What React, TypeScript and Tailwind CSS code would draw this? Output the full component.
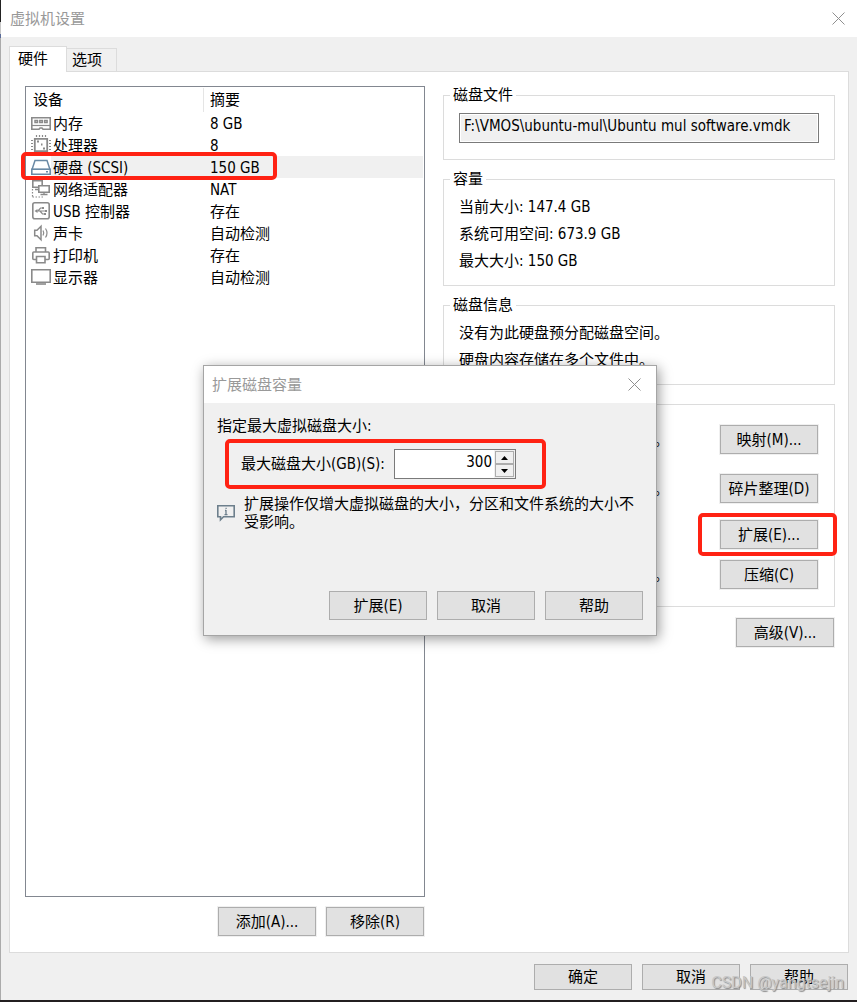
import { useState } from "react";
import type { ReactNode } from "react";
import clsx from "clsx";

type Device = {
  name: string;
  summary: string;
  icon: ReactNode;
};

const MemoryIcon = () => (
  <svg width="20" height="22" viewBox="0 0 20 22" fill="none" stroke="#8a8a8a" aria-hidden="true">
    <path d="M.8 5.800h18.400v11.400h-7.200l-1-1.200h-2l-1 1.200h-7.200z" strokeWidth="1.600" />
    <path d="M1 13.500h18" strokeWidth="1.200" />
    <path d="M4 8.500h2.500v2h-2.500zM8.800 8.500h2.500v2h-2.500zM13.600 8.500h2.500v2h-2.500z" strokeWidth="1.500" />
  </svg>
);

const CpuIcon = () => (
  <svg width="20" height="22" viewBox="0 0 20 22" fill="none" stroke="#8a8a8a" aria-hidden="true">
    <path d="M3.800 4.800h12.400v12.400h-12.400z" strokeWidth="1.800" />
    <path
      d="M5.500 1v2M8.500 1v2M11.500 1v2M14.500 1v2M5.500 19v2M8.500 19v2M11.500 19v2M14.500 19v2M0 6.500h2M0 9.500h2M0 12.500h2M0 15.500h2M18 6.500h2M18 9.500h2M18 12.500h2M18 15.500h2"
      strokeWidth="1.200"
    />
    <path d="M6 7.500h2M12 14.500h2M10 10.500h1.500" strokeWidth="1.800" />
  </svg>
);

const DiskIcon = () => (
  <svg width="20" height="22" viewBox="0 0 20 22" fill="none" stroke="#6a8aa5" aria-hidden="true">
    <path d="M4 4.500h12l3 9h-18z" fill="#fff" strokeWidth="1.500" />
    <path d="M.8 13.200h18.400v5h-18.400z" fill="#fff" strokeWidth="1.600" />
    <path d="M15 15.700h2" strokeWidth="1.500" />
  </svg>
);

const NetworkIcon = () => (
  <svg width="20" height="22" viewBox="0 0 20 22" fill="none" stroke="#8a8a8a" aria-hidden="true">
    <path d="M1.800 2.800h9.400v6.400h-9.400z" strokeWidth="1.600" />
    <path d="M7.800 7.800h10.400v6.400h-10.400z" fill="#fff" strokeWidth="1.600" />
    <path d="M9.500 16.500h7M13 14v2M4 11.500h3" strokeWidth="1.300" />
    <path d="M1.500 11v8M1.500 19h11" strokeWidth="1.200" strokeDasharray="1.500 1.500" />
  </svg>
);

const UsbIcon = () => (
  <svg width="20" height="22" viewBox="0 0 20 22" fill="none" stroke="#8a8a8a" aria-hidden="true">
    <rect x="1.800" y="2.800" width="16.400" height="16" rx="2" strokeWidth="1.600" />
    <path d="M5 11h10M7 11l2.500-3h2M9 11l2.500 3h2" strokeWidth="1.200" />
    <path d="M3.500 11l3-2v4z" fill="#8a8a8a" stroke="none" />
    <path d="M11 7h2v2h-2zM13 13h2v2h-2zM14 10h2v2h-2z" fill="#8a8a8a" stroke="none" />
  </svg>
);

const SoundIcon = () => (
  <svg width="20" height="22" viewBox="0 0 20 22" fill="none" stroke="#8a8a8a" strokeWidth="1.500" aria-hidden="true">
    <path d="M3.700 8.200h2.300l4-4v13.600l-4-4h-2.300z" />
    <path d="M12 8.500q1.500 2.500 0 5M14.500 6.500q3 4.500 0 9" strokeWidth="1.200" />
  </svg>
);

const PrinterIcon = () => (
  <svg width="20" height="22" viewBox="0 0 20 22" fill="none" stroke="#8a8a8a" strokeWidth="1.600" aria-hidden="true">
    <path d="M5 8v-4.200h9.500v4.200" />
    <rect x="1.800" y="8" width="16.400" height="7.500" rx="1" />
    <path d="M5.500 12.500h8.500v6.300h-8.500z" fill="#fff" />
  </svg>
);

const DisplayIcon = () => (
  <svg width="20" height="22" viewBox="0 0 20 22" fill="none" stroke="#8a8a8a" aria-hidden="true">
    <path d="M.8 3.800h18.400v12.400h-18.400z" strokeWidth="1.600" />
    <path d="M5 18h10" strokeWidth="1.600" />
  </svg>
);

const InfoIcon = () => (
  <svg width="18" height="18" viewBox="0 0 18 18" fill="none" stroke="#6d7f8c" aria-hidden="true">
    <path d="M.8 1.800h16.400v11h-10.700l-3 3v-3h-2.700z" strokeWidth="1.600" />
    <path d="M9 6v5M8 6.500h1M7.500 10.700h3M8.500 4.300h1.200" strokeWidth="1.300" />
  </svg>
);

const CloseIcon = () => (
  <svg width="13" height="13" viewBox="0 0 13 13" stroke="#8f8f8f" strokeWidth="1" aria-hidden="true">
    <path d="M.5 .5l12 12M12.500 .5l-12 12" />
  </svg>
);

const DEVICES: Device[] = [
  { name: "内存", summary: "8 GB", icon: <MemoryIcon /> },
  { name: "处理器", summary: "8", icon: <CpuIcon /> },
  { name: "硬盘 (SCSI)", summary: "150 GB", icon: <DiskIcon /> },
  { name: "网络适配器", summary: "NAT", icon: <NetworkIcon /> },
  { name: "USB 控制器", summary: "存在", icon: <UsbIcon /> },
  { name: "声卡", summary: "自动检测", icon: <SoundIcon /> },
  { name: "打印机", summary: "存在", icon: <PrinterIcon /> },
  { name: "显示器", summary: "自动检测", icon: <DisplayIcon /> },
];

const UTILITIES = [
  { text: "将该虚拟机磁盘映射到本地卷。", action: "映射(M)...", row: "mt-3" },
  { text: "整理文件碎片并整合可用空间。", action: "碎片整理(D)", row: "mt-5" },
  { text: "扩展磁盘容量。", action: "扩展(E)...", row: "mt-[17px]", marked: true },
  { text: "压缩磁盘以回收未使用的空间。", action: "压缩(C)", row: "mt-[11px]" },
];

const Button = ({ children, className }: { children: ReactNode; className?: string }) => (
  <button
    type="button"
    className={clsx(
      "w-[98px] shrink-0 border border-[#adadad] bg-[#e1e1e1] text-center leading-5 ring-1 ring-[#f0f0f0]",
      className ?? "h-[29px]"
    )}
  >
    {children}
  </button>
);

const Group = ({ title, children }: { title: string; children: ReactNode }) => (
  <fieldset className="min-w-0 border border-[#dcdcdc] px-[15px]">
    <legend className="-ml-[9px] px-[3px] leading-[18px]">{title}</legend>
    {children}
  </fieldset>
);

// 红色标注框
const Mark = ({ className }: { className: string }) => (
  <span
    className={clsx("pointer-events-none absolute z-10 rounded-[5px] border-4 border-[#ff2213]", className)}
    aria-hidden="true"
  />
);

const DeviceTable = () => {
  const [selected, setSelected] = useState(2);

  return (
    <div className="min-h-[320px] flex-1 border border-[#828790] bg-white">
      <table className="w-full table-fixed border-collapse text-left">
        <thead>
          <tr className="h-[25px]">
            <th className="w-[177px] p-0 pl-[7px] font-normal">设备</th>
            <th className="p-0 font-normal">
              <div className="border-l border-[#e5e5e5] pl-1.5 leading-6">摘要</div>
            </th>
          </tr>
        </thead>
        <tbody>
          {DEVICES.map((device, i) => (
            <tr key={device.name} className="h-[22px]" onClick={() => setSelected(i)}>
              <td className="relative p-0 pl-[5px]">
                <div className="flex h-[22px] items-center">
                  {device.icon}
                  <span className={clsx("h-[22px] flex-1 pt-0.5 pl-0.5", i === selected && "bg-[#f0f0f0]")}>
                    {device.name}
                  </span>
                </div>
                {i === selected && <Mark className="-top-1 -left-[5px] h-7 w-64" />}
              </td>
              <td className="p-0">
                <div className={clsx("mr-px h-[22px] pt-0.5 pl-[7px]", i === selected && "bg-[#f0f0f0]")}>
                  {device.summary}
                </div>
              </td>
            </tr>
          ))}
        </tbody>
      </table>
    </div>
  );
};

const ExpandDialog = () => {
  const [size, setSize] = useState(300);

  return (
    <div
      role="dialog"
      aria-labelledby="expand-title"
      className="absolute top-[365px] left-[203px] z-20 w-[454px] border border-[#a5a5a5] bg-[#f0f0f0] shadow-[2px_3px_12px_rgba(0,0,0,0.4)]"
    >
      <div className="flex h-[37px] items-center justify-between bg-white pr-[15px] pl-2">
        <h2 id="expand-title" className="text-[#999999]">扩展磁盘容量</h2>
        <button type="button" aria-label="关闭"><CloseIcon /></button>
      </div>

      <div className="px-[13px] pt-3.5 pb-[15px]">
        <p className="leading-[18px]">指定最大虚拟磁盘大小:</p>

        <div className="relative mt-3.5 flex h-[30px] items-center pl-6">
          <label htmlFor="disk-size" className="w-[153px]">最大磁盘大小(GB)(S):</label>
          <div className="flex h-[30px] w-[122px] border border-[#7a7a7a] bg-white">
            <input
              id="disk-size"
              type="text"
              inputMode="numeric"
              value={size}
              onChange={(e) => setSize(Number(e.target.value) || 0)}
              className="min-w-0 flex-1 pr-0.5 pb-1 text-right outline-none"
            />
            <div className="flex w-[21px] flex-col bg-[#f0f0f0] p-px">
              <button
                type="button"
                aria-label="增大"
                onClick={() => setSize(size + 1)}
                className="flex flex-1 items-center justify-center border border-[#adadad]"
              >
                <svg width="7" height="4" viewBox="0 0 7 4"><path d="M0 4l3.500-4 3.500 4z" /></svg>
              </button>
              <button
                type="button"
                aria-label="减小"
                onClick={() => setSize(size - 1)}
                className="flex flex-1 items-center justify-center border border-[#adadad]"
              >
                <svg width="7" height="4" viewBox="0 0 7 4"><path d="M0 0l3.500 4 3.500-4z" /></svg>
              </button>
            </div>
          </div>
          <Mark className="-top-[10px] left-2 h-[50px] w-[321px]" />
        </div>

        <div className="mt-4 flex items-center gap-[9px]">
          <span className="shrink-0"><InfoIcon /></span>
          <p className="leading-[18px]">扩展操作仅增大虚拟磁盘的大小，分区和文件系统的大小不受影响。</p>
        </div>

        <div className="mt-[60px] flex justify-end gap-2.5">
          <Button>扩展(E)</Button>
          <Button>取消</Button>
          <Button>帮助</Button>
        </div>
      </div>
    </div>
  );
};

const App = () => {
  return (
    <div className="relative flex min-h-screen flex-col border-b-2 border-[#231f20] bg-[#f0f0f0] pl-px font-['DejaVu_Sans_Condensed','Noto_Sans','Noto_Sans_CJK_SC',sans-serif] text-[15px] leading-5 text-black">
      {/* 窗口左侧露出的背景 */}
      <div
        className="absolute inset-y-0 left-0 w-px bg-[linear-gradient(#222_22px,#c8c8c8_22px,#c8c8c8_34px,#5a6b99_34px,#5a6b99_38px,#ababab_38px)]"
        aria-hidden="true"
      />

      <header className="flex h-[37px] items-center justify-between bg-white pr-3 pl-[9px]">
        <h1 className="text-[#999999]">虚拟机设置</h1>
        <button type="button" aria-label="关闭"><CloseIcon /></button>
      </header>

      <div role="tablist" className="mt-[9px] ml-2 flex items-end">
        <button
          type="button"
          role="tab"
          aria-selected="true"
          className="relative -mb-px h-[26px] w-[58px] border border-b-0 border-[#dcdcdc] bg-white pb-0.5 pl-2 text-left"
        >
          硬件
        </button>
        <button
          type="button"
          role="tab"
          aria-selected="false"
          className="h-[23px] w-[50px] border border-b-0 border-l-0 border-[#dcdcdc] pl-[5px] text-left"
        >
          选项
        </button>
      </div>

      <main className="mr-2 ml-2 flex flex-1 gap-[18px] border border-[#dcdcdc] bg-white pt-3.5 pr-[13px] pb-4 pl-[15px]">
        <section className="flex w-[400px] flex-col">
          <DeviceTable />
          <div className="mt-2.5 mr-px flex justify-end gap-2.5">
            <Button>添加(A)...</Button>
            <Button>移除(R)</Button>
          </div>
        </section>

        <section className="flex min-w-0 flex-1 flex-col gap-2.5">
          <Group title="磁盘文件">
            <input
              type="text"
              readOnly
              aria-label="磁盘文件"
              value="F:\VMOS\ubuntu-mul\Ubuntu mul software.vmdk"
              className="mt-[9px] mb-4 block h-[30px] w-full border border-[#7a7a7a] bg-[#f0f0f0] px-1 pb-1 ring-1 ring-white outline-none ring-inset"
            />
          </Group>

          <Group title="容量">
            <div className="pt-1.5 pb-2.5 leading-[27px]">
              <p>当前大小: 147.4 GB</p>
              <p>系统可用空间: 673.9 GB</p>
              <p>最大大小: 150 GB</p>
            </div>
          </Group>

          <Group title="磁盘信息">
            <div className="pt-1.5 pb-2.5 leading-[27px]">
              <p>没有为此硬盘预分配磁盘空间。</p>
              <p>硬盘内容存储在多个文件中。</p>
            </div>
          </Group>

          <Group title="磁盘实用工具">
            <div className="pb-[17px]">
              {UTILITIES.map((item) => (
                <div key={item.action} className={clsx("relative flex items-center justify-between pr-px", item.row)}>
                  <span>{item.text}</span>
                  <Button>{item.action}</Button>
                  {item.marked && <Mark className="-top-[7px] -right-[18px] h-[43px] w-[139px]" />}
                </div>
              ))}
            </div>
          </Group>

          <div className="mt-px mr-px flex justify-end">
            <Button>高级(V)...</Button>
          </div>
        </section>
      </main>

      <footer className="relative flex justify-end gap-2.5 pt-[11px] pr-[9px] pb-2.5">
        <Button className="h-[26px]">确定</Button>
        <Button className="h-[26px]">取消</Button>
        <Button className="h-[26px]">帮助</Button>
        <span className="pointer-events-none absolute right-[13px] bottom-[7px] font-[Roboto,sans-serif] text-base leading-5 text-[#c8c8c8] [text-shadow:1px_1px_1px_#888]">
          CSDN @yangtsejin
        </span>
      </footer>

      <ExpandDialog />
    </div>
  );
};

export default App;
